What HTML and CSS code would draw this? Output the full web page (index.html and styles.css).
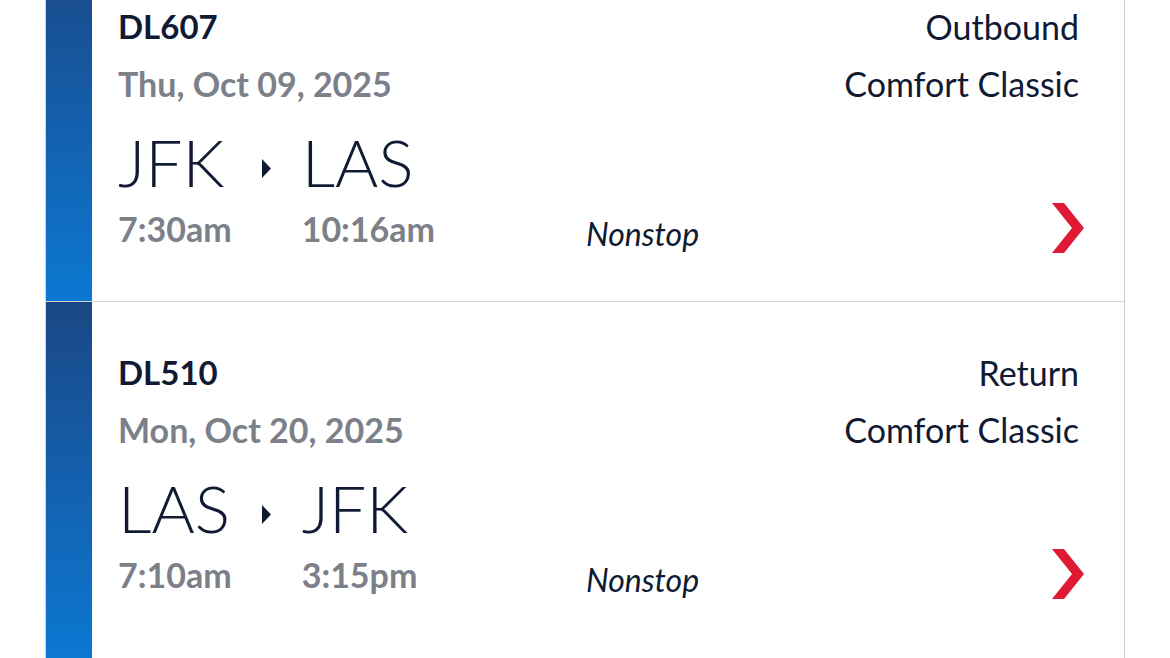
FILE: index.html
```html
<!DOCTYPE html>
<html>
<head>
<meta charset="utf-8">
<link rel="stylesheet" href="styles.css">
</head>
<body>
<div class="list">
  <div class="card">
    <div class="bar"></div>
    <div class="content">
      <div class="row">
        <span class="flight">DL607</span>
        <span class="dir">Outbound</span>
      </div>
      <div class="row">
        <span class="date">Thu, Oct 09, 2025</span>
        <span class="cabin">Comfort Classic</span>
      </div>
      <div class="lower">
        <div class="route">
          <span class="apt">JFK</span>
          <span class="arrow"><svg width="9" height="21" viewBox="0 0 9 21"><polygon points="0,1 9,10.5 0,20" fill="#101a33"/></svg></span>
          <span class="apt">LAS</span>
          <span class="time">7:30am</span>
          <span></span>
          <span class="time">10:16am</span>
        </div>
        <span class="stops">Nonstop</span>
        <svg class="chev" width="32" height="50" viewBox="0 0 32 50"><polygon points="0,0 12,0 32,25 12,50 0,50 20,25" fill="#e01a35"/></svg>
      </div>
    </div>
  </div>
  <div class="card last">
    <div class="bar"></div>
    <div class="content">
      <div class="row">
        <span class="flight">DL510</span>
        <span class="dir">Return</span>
      </div>
      <div class="row">
        <span class="date">Mon, Oct 20, 2025</span>
        <span class="cabin">Comfort Classic</span>
      </div>
      <div class="lower">
        <div class="route">
          <span class="apt">LAS</span>
          <span class="arrow"><svg width="9" height="21" viewBox="0 0 9 21"><polygon points="0,1 9,10.5 0,20" fill="#101a33"/></svg></span>
          <span class="apt">JFK</span>
          <span class="time">7:10am</span>
          <span></span>
          <span class="time">3:15pm</span>
        </div>
        <span class="stops">Nonstop</span>
        <svg class="chev" width="32" height="50" viewBox="0 0 32 50"><polygon points="0,0 12,0 32,25 12,50 0,50 20,25" fill="#e01a35"/></svg>
      </div>
    </div>
  </div>
</div>
</body>
</html>
```
FILE: styles.css
```css
html, body {
  margin: 0;
  padding: 0;
  background: #ffffff;
  overflow: hidden;
}
body {
  font-family: Lato, "Open Sans", sans-serif;
  color: #101a33;
}
.list {
  margin-left: 45px;
  width: 1080px;
  margin-top: -44px;
}
.card {
  display: flex;
  height: 345px;
  border-left: 1px solid #d4d4d4;
  border-right: 1px solid #d0d0d0;
  border-bottom: 1px solid #d4d4d4;
}
.card.last {
  height: 356px;
  border-bottom: none;
}
.bar {
  width: 46px;
  flex: 0 0 46px;
  background: linear-gradient(180deg, #1a4785 0%, #1460ae 50%, #0b78d1 100%);
}
.content {
  flex: 1;
  padding: 42px 45px 0 26px;
  display: flex;
  flex-direction: column;
}
.row {
  display: flex;
  justify-content: space-between;
  line-height: 57px;
  height: 57px;
  font-size: 34px;
}
.flight {
  font-weight: 700;
  font-size: 33px;
}
.date {
  font-weight: 700;
  font-size: 34px;
  color: #7c8088;
}
.dir, .cabin {
  font-weight: 400;
}
.lower {
  display: flex;
  align-items: flex-end;
  margin-top: 10px;
}
.route {
  display: grid;
  grid-template-columns: auto 10px auto;
  justify-content: start;
  column-gap: 30px;
  width: 468px;
  flex: 0 0 468px;
}
.apt {
  font-size: 66px;
  font-weight: 300;
  line-height: 80px;
}
.arrow {
  display: flex;
  align-items: center;
  height: 80px;
  padding-top: 12px;
  box-sizing: border-box;
}
.time {
  font-size: 34px;
  font-weight: 700;
  color: #7c8088;
  line-height: 40px;
  margin-top: 7px;
}
.stops {
  font-size: 32px;
  font-style: italic;
  line-height: 40px;
  margin-bottom: -5px;
}
.chev {
  margin-left: auto;
  margin-right: -5px;
  margin-bottom: -4px;
}
```
